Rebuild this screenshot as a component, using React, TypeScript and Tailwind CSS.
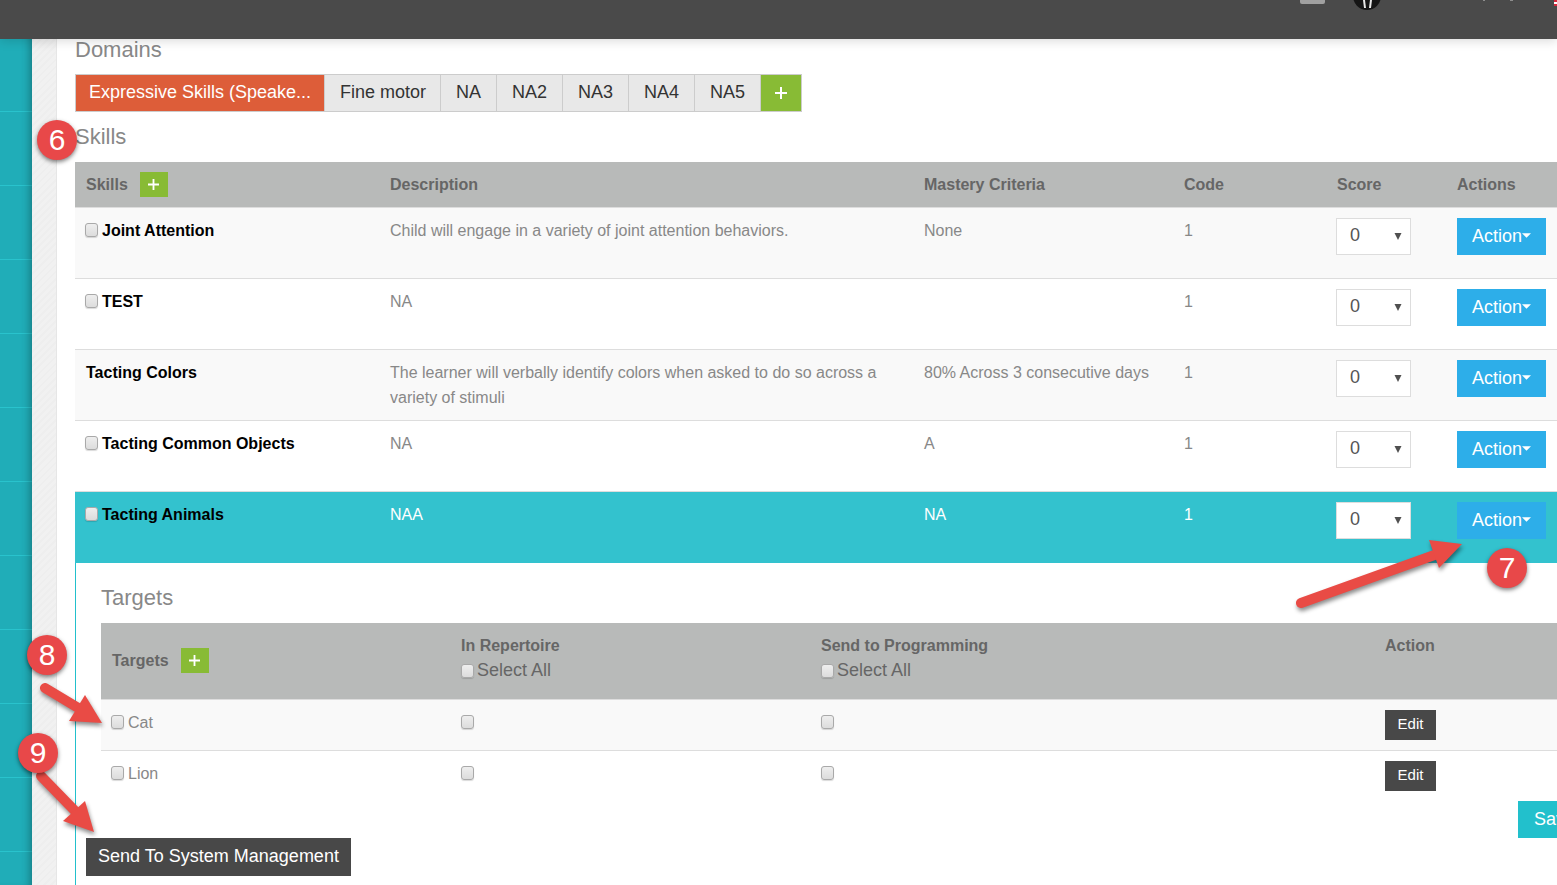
import { useState } from "react";

type Skill = {
  name: string;
  description: string;
  mastery: string;
  code: string;
  checkable: boolean;
};

const domains = ["Expressive Skills (Speake...", "Fine motor", "NA", "NA2", "NA3", "NA4", "NA5"];

const skills: Skill[] = [
  {
    name: "Joint Attention",
    description: "Child will engage in a variety of joint attention behaviors.",
    mastery: "None",
    code: "1",
    checkable: true,
  },
  { name: "TEST", description: "NA", mastery: "", code: "1", checkable: true },
  {
    name: "Tacting Colors",
    description:
      "The learner will verbally identify colors when asked to do so across a variety of stimuli",
    mastery: "80% Across 3 consecutive days",
    code: "1",
    checkable: false,
  },
  { name: "Tacting Common Objects", description: "NA", mastery: "A", code: "1", checkable: true },
  { name: "Tacting Animals", description: "NAA", mastery: "NA", code: "1", checkable: true },
];

const targets = ["Cat", "Lion"];

function Checkbox({ label }: { label?: string }) {
  return (
    <input
      type="checkbox"
      aria-label={label}
      className="h-[14px] w-[13px] shrink-0 appearance-none rounded-[3px] border border-[#a9a9a9] bg-linear-to-b from-[#eeeeee] to-[#dcdcdc] shadow-[0_1px_1px_rgba(0,0,0,0.15)] checked:bg-[#2daee9]"
    />
  );
}

function Plus({ className }: { className: string }) {
  return (
    <svg viewBox="0 0 12 12" className={className} aria-hidden="true">
      <path d="M6 0v12M0 6h12" stroke="#fff" strokeWidth="2" fill="none" />
    </svg>
  );
}

function AddButton({ label }: { label: string }) {
  return (
    <button
      aria-label={label}
      className="flex h-[25px] w-7 items-center justify-center bg-[#88bb35]"
    >
      <Plus className="h-[11px] w-[11px]" />
    </button>
  );
}

function Step({ children, className }: { children: string; className: string }) {
  return (
    <span
      className={`absolute flex h-10 w-10 items-center justify-center rounded-full bg-[#e84849] text-[30px] leading-none text-white shadow-[0_2px_4px_rgba(0,0,0,0.5)] ${className}`}
    >
      {children}
    </span>
  );
}

function Arrow({ className, viewBox, d, head }: { className: string; viewBox: string; d: string; head: string }) {
  return (
    <svg
      viewBox={viewBox}
      aria-hidden="true"
      className={`pointer-events-none absolute overflow-visible drop-shadow-[1px_3px_2px_rgba(0,0,0,0.45)] ${className}`}
    >
      <path d={d} stroke="#e94b45" strokeWidth="10" strokeLinecap="round" />
      <path d={head} fill="#e94b45" />
    </svg>
  );
}

function Header() {
  return (
    <header className="absolute inset-x-0 top-0 z-10 flex h-[39px] justify-end bg-[#4a4a4a] shadow-[0_2px_10px_rgba(0,0,0,0.15)]">
      <svg viewBox="0 0 260 12" className="h-3 w-[260px]" aria-hidden="true">
        <rect x="3" y="-10" width="25" height="14" rx="2" fill="#a0a0a0" />
        <circle cx="70" cy="-4" r="14" fill="#151515" />
        <path d="M67 0l1 8M74 0l-1 8" stroke="#e8e8e8" strokeWidth="2" />
        <path d="M186 0h2M213 0h3" stroke="#8d8d8d" strokeWidth="2" />
        <path d="M257 1h3M257 5h3" stroke="#d8283c" strokeWidth="2" />
        <path d="M257 3h3" stroke="#fff" strokeWidth="2" />
      </svg>
    </header>
  );
}

function DomainTabs() {
  const [active, setActive] = useState(0);

  return (
    <div className="flex">
      {domains.map((domain, i) => (
        <button
          key={domain}
          onClick={() => setActive(i)}
          className={`-mr-px h-[38px] border border-[#cccccc] px-[15px] pb-[3px] text-lg leading-none whitespace-nowrap first:w-[250px] first:px-0 nth-2:w-[117px] ${
            i === active ? "bg-[#dd5d39] text-white" : "bg-[#e8e8e8] text-[#333333]"
          }`}
        >
          {domain}
        </button>
      ))}
      <button
        aria-label="Add domain"
        className="flex h-[38px] w-[42px] items-center justify-center border border-[#cccccc] bg-[#88bb35]"
      >
        <Plus className="h-3 w-3" />
      </button>
    </div>
  );
}

function ScoreSelect({ label }: { label: string }) {
  return (
    <div className="relative -ml-px w-[75px]">
      <select
        aria-label={label}
        className="block h-[37px] w-full appearance-none border border-[#dddddd] bg-white pb-0.5 pl-[13px] text-lg leading-none text-[#555555]"
      >
        <option>0</option>
        <option>1</option>
        <option>2</option>
      </select>
      <svg
        viewBox="0 0 8 7"
        aria-hidden="true"
        className="pointer-events-none absolute top-[15px] right-[9px] h-[7px] w-2"
      >
        <path d="M0.500 0h7L4 7z" fill="#505050" />
      </svg>
    </div>
  );
}

function ActionButton() {
  return (
    <button className="flex h-[37px] w-[89px] items-center justify-center bg-[#2daee9] pb-px text-lg text-white">
      Action
      <svg viewBox="0 0 10 5" className="h-[5px] w-[9px]" aria-hidden="true">
        <path d="M0 0h10L5 5z" fill="#fff" />
      </svg>
    </button>
  );
}

function SkillsTable() {
  const selected = "Tacting Animals";

  return (
    <table className="w-full table-fixed border-collapse text-left text-base leading-[25px]">
      <colgroup>
        <col className="w-[304px]" />
        <col />
        <col className="w-[260px]" />
        <col className="w-[153px]" />
        <col className="w-[120px]" />
        <col className="w-[171px]" />
      </colgroup>
      <thead className="bg-[#b8bab9] text-[#666666]">
        <tr className="h-[45px]">
          <th className="px-[11px] py-0">
            <div className="flex items-center gap-3">
              Skills
              <AddButton label="Add skill" />
            </div>
          </th>
          <th className="px-[11px]">Description</th>
          <th className="px-[11px]">Mastery Criteria</th>
          <th className="px-[11px]">Code</th>
          <th className="px-[11px]">Score</th>
          <th className="px-[11px]">Actions</th>
        </tr>
      </thead>
      <tbody>
        {skills.map((skill) => (
          <tr
            key={skill.name}
            className={`border-t border-[#dddddd] align-top ${
              skill.name === selected
                ? "h-[72px] bg-[#33c2ce] text-white"
                : "h-[71px] text-[#888888] odd:bg-[#f9f9f9]"
            }`}
          >
            <td className="px-[10px] pt-[10px] font-bold text-black">
              {skill.checkable ? (
                <label className="flex items-center gap-1">
                  <Checkbox />
                  {skill.name}
                </label>
              ) : (
                <span className="pl-px">{skill.name}</span>
              )}
            </td>
            <td className="px-[11px] pt-[10px]">{skill.description}</td>
            <td className="px-[11px] pt-[10px]">{skill.mastery}</td>
            <td className="px-[11px] pt-[10px]">{skill.code}</td>
            <td className="px-[11px] pt-[10px]">
              <ScoreSelect label={`Score for ${skill.name}`} />
            </td>
            <td className="px-[11px] pt-[10px]">
              <ActionButton />
            </td>
          </tr>
        ))}
      </tbody>
    </table>
  );
}

function TargetsTable() {
  return (
    <table className="w-full table-fixed border-collapse text-left text-base leading-[25px]">
      <colgroup>
        <col className="w-[349px]" />
        <col className="w-[360px]" />
        <col />
        <col className="w-[243px]" />
      </colgroup>
      <thead className="bg-[#b8bab9] align-top text-[#666666]">
        <tr className="h-[76px]">
          <th className="px-[11px] align-middle">
            <div className="flex items-center gap-3">
              Targets
              <AddButton label="Add target" />
            </div>
          </th>
          {["In Repertoire", "Send to Programming"].map((title) => (
            <th key={title} className="px-[11px] pt-[10px]">
              {title}
              <label className="flex items-center gap-[3px] text-lg leading-[25px] font-normal">
                <Checkbox />
                Select All
              </label>
            </th>
          ))}
          <th className="px-[11px] pt-[10px]">Action</th>
        </tr>
      </thead>
      <tbody className="text-[#888888]">
        {targets.map((target) => (
          <tr
            key={target}
            className="h-[51px] border-t border-[#dddddd] align-top odd:bg-[#f9f9f9]"
          >
            <td className="px-[10px] pt-[10px]">
              <label className="flex items-center gap-1">
                <Checkbox />
                {target}
              </label>
            </td>
            <td className="px-[11px] pt-[10px]">
              <div className="flex h-[25px] items-center">
                <Checkbox label={`${target} in repertoire`} />
              </div>
            </td>
            <td className="px-[11px] pt-[10px]">
              <div className="flex h-[25px] items-center">
                <Checkbox label={`Send ${target} to programming`} />
              </div>
            </td>
            <td className="px-[11px] pt-[10px]">
              <button className="block h-[30px] w-[51px] bg-[#484848] pb-0.5 text-[15px] text-white">
                Edit
              </button>
            </td>
          </tr>
        ))}
      </tbody>
    </table>
  );
}

export default function App() {
  return (
    <div className="relative flex min-h-screen overflow-hidden bg-white font-['Liberation_Sans',Arial,sans-serif]">
      <Header />

      {/* Sidebar and paper strip */}
      <div className="w-8 shrink-0 bg-[#20adb8] bg-[repeating-linear-gradient(to_bottom,transparent_0_37px,#29c3cd_37px_38px,transparent_38px_74px)] shadow-[inset_-8px_0_8px_-6px_rgba(0,0,0,0.3)]" />
      <div className="w-[25px] shrink-0 border-r border-[#e6e6e6] bg-[repeating-linear-gradient(135deg,#f1f1f1_0_3px,#eeeeee_3px_5px)]" />

      <main className="min-w-0 flex-1 pt-[37px] pl-[18px]">
        {/* The tables run past the right edge of the window */}
        <div className="-mr-[60px]">
          <h2 className="mb-3 text-[22px] leading-[25px] text-[#888888]">Domains</h2>
          <DomainTabs />
          <h2 className="my-[12px] pb-px text-[22px] leading-[25px] text-[#888888]">Skills</h2>
          <SkillsTable />

          <section className="border-l border-[#22c0cc] pb-[9px]">
            <div className="pt-[22px] pl-[25px]">
              <h2 className="mb-[13px] text-[22px] leading-[25px] text-[#888888]">Targets</h2>
              <TargetsTable />
            </div>
            <div className="flex justify-end pr-[26px]">
              <button className="h-[37px] w-[73px] bg-[#22c0cc] pb-0.5 text-lg leading-none text-white">
                Save
              </button>
            </div>
            <button className="ml-[10px] block h-[38px] w-[265px] bg-[#484848] pb-0.5 text-lg leading-none text-white">
              Send To System Management
            </button>
          </section>
        </div>
      </main>

      {/* Numbered steps pointing at the controls */}
      <Arrow
        className="top-[540px] right-[95px] h-[68px] w-[166px]"
        viewBox="1296 540 166 68"
        d="M1301 603L1440 553"
        head="M1462 544L1429 540L1439 568Z"
      />
      <Arrow
        className="top-[682px] left-[39px] h-[42px] w-[64px]"
        viewBox="39 682 64 42"
        d="M45 688L80 709"
        head="M102 723L85 695L69 721Z"
      />
      <Arrow
        className="top-[770px] left-[35px] h-[62px] w-[60px]"
        viewBox="35 770 60 62"
        d="M41 776L76 812"
        head="M94 832L85 801L63 821Z"
      />
      <Step className="top-[120px] left-[37px]">6</Step>
      <Step className="top-[548px] right-[30px]">7</Step>
      <Step className="top-[635px] left-[27px]">8</Step>
      <Step className="top-[733px] left-[18px]">9</Step>
    </div>
  );
}
